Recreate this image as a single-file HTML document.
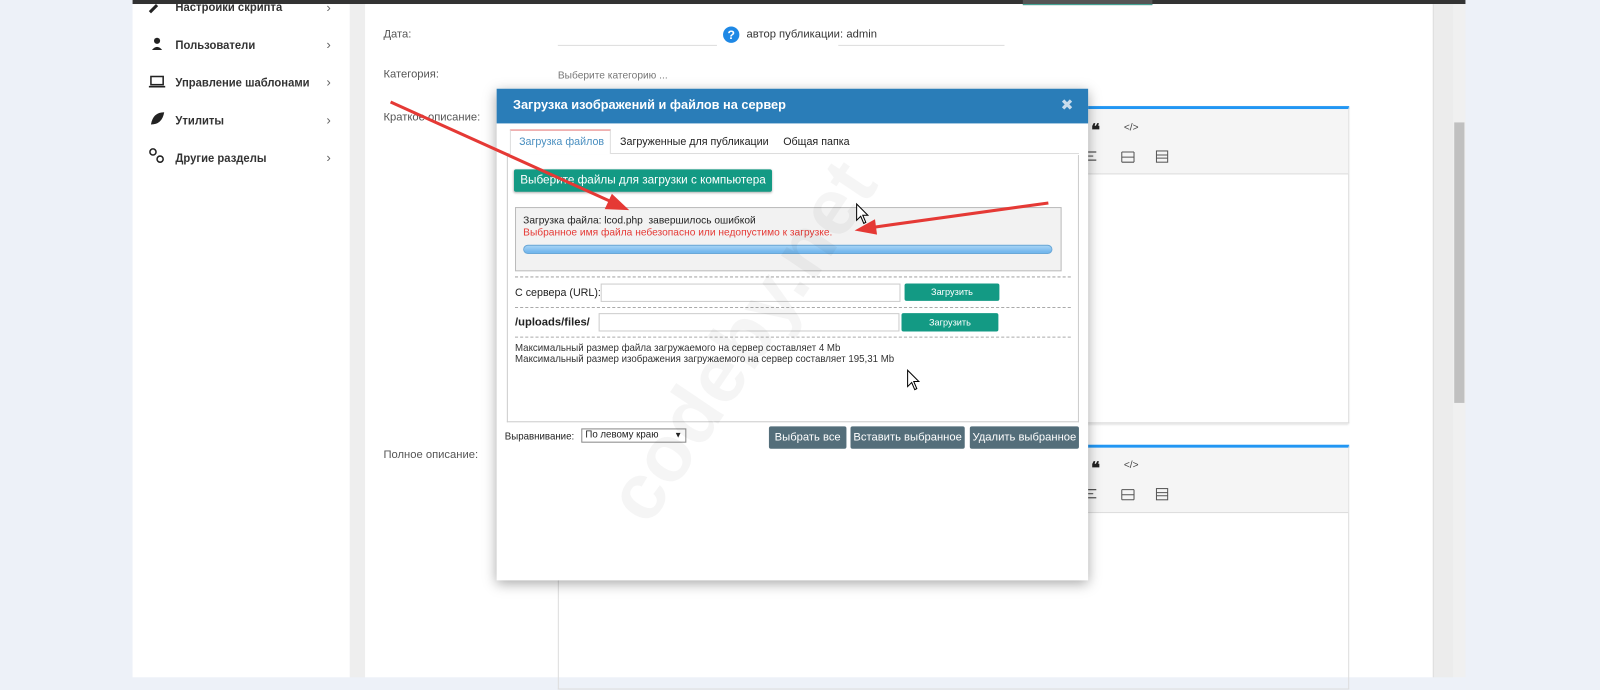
<!DOCTYPE html>
<html><head><meta charset="utf-8">
<style>
*{box-sizing:border-box;margin:0;padding:0}
html,body{width:1600px;height:662px;overflow:hidden;background:#edf1f8;font-family:"Liberation Sans","DejaVu Sans",sans-serif}
#w{position:absolute;left:0;top:0;width:1569px;height:660px;transform:scale(1.0198,1.02);transform-origin:0 0}
.a{position:absolute}
.sb{font-size:12px;color:#333;font-weight:bold;transform:scaleX(.92);transform-origin:0 0}
.chev{font-size:13px;color:#666}
.lbl{font-size:11px;color:#555}
.btn{position:absolute;background:#546e7a;color:#fff;font-size:11px;text-align:center;line-height:22px;border-radius:2px}
.g{position:absolute;background:#139a84;color:#fff;border-radius:2px;text-align:center}
.dash{position:absolute;border-top:1px dashed #aaa;height:0}
.inp{position:absolute;border:1px solid #ccc;background:#fff}
</style></head><body><div id="w">
<div class="a" style="left:130px;top:0;width:1307px;height:4px;background:#333"></div>
<div class="a" style="left:130px;top:4px;width:213px;height:660px;background:#fff"></div>
<div class="a" style="left:343px;top:4px;width:15px;height:660px;background:#eee"></div>
<div class="a" style="left:358px;top:4px;width:1047px;height:660px;background:#fff"></div>
<div class="a" style="left:1405px;top:4px;width:20px;height:660px;background:#ececec;border-left:1px solid #ddd"></div>
<div class="a" style="left:1425px;top:4px;width:12px;height:660px;background:#f0f0f0"></div>
<div class="a" style="left:1426px;top:120px;width:10px;height:275px;background:#c0c0c0"></div>
<div class="a" style="left:1003px;top:0;width:127px;height:5px;background:#555;border-bottom:1px solid #4a9"></div>

<div class="a sb" style="left:172px;top:0px">Настройки скрипта</div>
<div class="a sb" style="left:172px;top:37px">Пользователи</div>
<div class="a sb" style="left:172px;top:74px">Управление шаблонами</div>
<div class="a sb" style="left:172px;top:111px">Утилиты</div>
<div class="a sb" style="left:172px;top:148px">Другие разделы</div>
<div class="a chev" style="left:320px;top:0px">›</div>
<div class="a chev" style="left:320px;top:36px">›</div>
<div class="a chev" style="left:320px;top:73px">›</div>
<div class="a chev" style="left:320px;top:110px">›</div>
<div class="a chev" style="left:320px;top:147px">›</div>
<svg class="a" style="left:144px;top:0" width="20" height="165">
<path d="M3 12 L10 5" stroke="#222" stroke-width="3"/>
<circle cx="10" cy="40" r="3" fill="#222"/><path d="M5 49 Q10 43 15 49 Z" fill="#222"/>
<rect x="4" y="75" width="12" height="8" fill="none" stroke="#222" stroke-width="1.5"/><path d="M2 85 H18" stroke="#222" stroke-width="1.5"/>
<path d="M4 122 Q6 110 17 110 Q15 122 4 122Z" fill="#222"/>
<circle cx="6" cy="149" r="3" fill="none" stroke="#222" stroke-width="1.5"/><circle cx="13" cy="156" r="3" fill="none" stroke="#222" stroke-width="1.5"/>
</svg>

<div class="a lbl" style="left:376px;top:28px">Дата:</div>
<div class="a lbl" style="left:376px;top:67px">Категория:</div>
<div class="a lbl" style="left:376px;top:109px">Краткое описание:</div>
<div class="a lbl" style="left:376px;top:440px">Полное описание:</div>
<div class="a" style="left:547px;top:44px;width:156px;border-top:1px solid #ddd"></div>
<div class="a" style="left:709px;top:26px;width:16px;height:16px;border-radius:50%;background:#1e88e5;color:#fff;font-size:12px;font-weight:bold;text-align:center;line-height:16px">?</div>
<div class="a lbl" style="left:732px;top:28px;color:#333">автор публикации:</div>
<div class="a lbl" style="left:830px;top:28px;color:#333">admin</div>
<div class="a" style="left:822px;top:44px;width:163px;border-top:1px solid #ddd"></div>
<div class="a" style="left:547px;top:69px;font-size:10px;color:#777">Выберите категорию ...</div>

<div class="a" style="left:547px;top:104px;width:776px;height:311px;border:1px solid #ddd;border-top:3px solid #2196f3;box-shadow:0 1px 2px rgba(0,0,0,.15)">
<div style="height:64px;background:#f5f5f5;border-bottom:1px solid #ddd"></div></div>
<div class="a" style="left:547px;top:436px;width:776px;height:240px;border:1px solid #ddd;border-top:3px solid #2196f3">
<div style="height:64px;background:#f5f5f5;border-bottom:1px solid #ddd"></div></div>
<div class="a" style="left:1070px;top:118px;font-size:16px;font-weight:bold;color:#222;font-family:'Liberation Serif',serif">❝</div>
<div class="a" style="left:1102px;top:120px;font-size:10px;color:#444">&lt;/&gt;</div>
<div class="a" style="left:1070px;top:449px;font-size:16px;font-weight:bold;color:#222;font-family:'Liberation Serif',serif">❝</div>
<div class="a" style="left:1102px;top:451px;font-size:10px;color:#444">&lt;/&gt;</div>
<svg class="a" style="left:1060px;top:145px" width="90" height="20"><path d="M5 4H15M5 8H12M5 12H15" stroke="#555" stroke-width="1.2"/><path d="M40 4V14M52 4V14M40 9H52M40 4H52M40 14H52" stroke="#555"/><rect x="74" y="3" width="11" height="11" fill="none" stroke="#555"/><path d="M74 7H85M74 10H85" stroke="#555"/></svg>
<svg class="a" style="left:1060px;top:476px" width="90" height="20"><path d="M5 4H15M5 8H12M5 12H15" stroke="#555" stroke-width="1.2"/><path d="M40 4V14M52 4V14M40 9H52M40 4H52M40 14H52" stroke="#555"/><rect x="74" y="3" width="11" height="11" fill="none" stroke="#555"/><path d="M74 7H85M74 10H85" stroke="#555"/></svg>

<div class="a" style="left:487px;top:87px;width:580px;height:482px;background:#fff;box-shadow:0 3px 12px rgba(0,0,0,.35)"></div>
<div class="a" style="left:487px;top:87px;width:580px;height:34px;background:#2a7db8"></div>
<div class="a" style="left:503px;top:96px;color:#fff;font-size:12.5px;font-weight:bold">Загрузка изображений и файлов на сервер</div>
<div class="a" style="left:1040px;top:94px;color:#c9dcec;font-size:15px;font-weight:bold">✖</div>
<div class="a" style="left:497px;top:150px;width:561px;height:1px;background:#ddd"></div>
<div class="a" style="left:500px;top:127px;width:99px;height:24px;background:#fff;border:1px solid #ddd;border-top:1px solid #e57373;border-bottom:none"></div>
<div class="a" style="left:509px;top:133px;font-size:10.5px;color:#4a8fc0">Загрузка файлов</div>
<div class="a" style="left:608px;top:133px;font-size:10.5px;color:#222">Загруженные для публикации</div>
<div class="a" style="left:768px;top:133px;font-size:10.5px;color:#222">Общая папка</div>
<div class="a" style="left:497px;top:152px;width:561px;height:262px;border:1px solid #ccc;border-top:none"></div>
<div class="g" style="left:504px;top:166px;width:253px;height:22px;line-height:22px;font-size:11.5px;box-shadow:0 1px 2px rgba(0,0,0,.3)">Выберите файлы для загрузки с компьютера</div>
<div class="a" style="left:505px;top:203px;width:536px;height:63px;background:#f2f2f2;border:1px solid #bbb"></div>
<div class="a" style="left:513px;top:211px;font-size:10px;color:#222">Загрузка файла: lcod.php &nbsp;завершилось ошибкой</div>
<div class="a" style="left:513px;top:223px;font-size:10px;color:#e53935">Выбранное имя файла небезопасно или недопустимо к загрузке.</div>
<div class="a" style="left:513px;top:240px;width:519px;height:9px;border-radius:5px;background:linear-gradient(#a6d3f5,#6cb3ec);border:1px solid #6aa8d8"></div>
<div class="dash" style="left:505px;top:271px;width:545px"></div>
<div class="a" style="left:505px;top:281px;font-size:10.5px;color:#222">С сервера (URL):</div>
<div class="inp" style="left:589px;top:278px;width:294px;height:18px"></div>
<div class="g" style="left:887px;top:278px;width:93px;height:17px;line-height:17px;font-size:9px">Загрузить</div>
<div class="dash" style="left:505px;top:301px;width:545px"></div>
<div class="a" style="left:505px;top:310px;font-size:11px;color:#222;font-weight:bold">/uploads/files/</div>
<div class="inp" style="left:587px;top:307px;width:295px;height:18px"></div>
<div class="g" style="left:884px;top:307px;width:95px;height:18px;line-height:18px;font-size:9px">Загрузить</div>
<div class="dash" style="left:505px;top:330px;width:545px"></div>
<div class="a" style="left:505px;top:336px;font-size:9.5px;color:#333;line-height:11px">Максимальный размер файла загружаемого на сервер составляет 4 Mb<br>Максимальный размер изображения загружаемого на сервер составляет 195,31 Mb</div>
<div class="a" style="left:495px;top:423px;font-size:9.5px;color:#222">Выравнивание:</div>
<div class="a" style="left:570px;top:420px;width:103px;height:14px;border:1px solid #888;font-size:9.5px;line-height:12px;padding-left:3px;color:#222">По левому краю<span style="position:absolute;right:3px;font-size:8px">▼</span></div>
<div class="btn" style="left:754px;top:418px;width:76px">Выбрать все</div>
<div class="btn" style="left:834px;top:418px;width:112px">Вставить выбранное</div>
<div class="btn" style="left:951px;top:418px;width:107px">Удалить выбранное</div>

<div class="a" style="left:490px;top:225px;font-size:78px;font-weight:bold;color:rgba(0,0,0,.04);transform:rotate(-56deg);transform-origin:center;white-space:nowrap;width:560px">codeby.net</div>

<svg class="a" style="left:0;top:0" width="1569" height="649">
<path d="M383 100 L600 198" stroke="#e53935" stroke-width="3"/><path d="M617 206 L593 205 L600 190 Z" fill="#e53935"/>
<path d="M1028 199 L855 223" stroke="#e53935" stroke-width="3"/><path d="M838 226 L858 215 L860 230 Z" fill="#e53935"/>
<path d="M840 200 V216 L844 212 L847 219 L849 218 L846 211 L851 211 Z" fill="#fff" stroke="#000" stroke-width="1"/>
<path d="M890 363 V379 L894 375 L897 382 L899 381 L896 374 L901 374 Z" fill="#fff" stroke="#000" stroke-width="1"/>
</svg>
</div></body></html>
